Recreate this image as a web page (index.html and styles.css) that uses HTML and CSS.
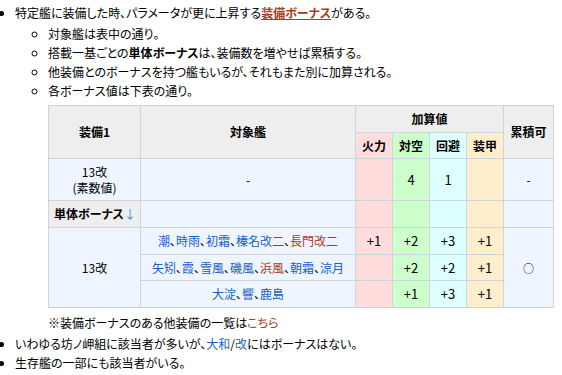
FILE: index.html
```html
<!DOCTYPE html>
<html lang="ja">
<head>
<meta charset="utf-8">
<title>装備ボーナス</title>
<link rel="stylesheet" href="styles.css">
</head>
<body>
<ul class="list1">
  <li>特定艦に装備した時、パラメータが更に上昇する<a class="visited strong" href="#">装備ボーナス</a>がある。
    <ul class="list2">
      <li>対象艦は表中の通り。</li>
      <li>搭載一基ごとの<b>単体ボーナス</b>は、装備数を増やせば累積する。</li>
      <li>他装備とのボーナスを持つ艦もいるが、それもまた別に加算される。</li>
      <li>各ボーナス値は下表の通り。
        <table class="bonus">
          <colgroup>
            <col class="c1"><col class="c2"><col class="c3"><col class="c3"><col class="c3"><col class="c3"><col class="c7">
          </colgroup>
          <tr class="h27">
            <th rowspan="2">装備1</th>
            <th rowspan="2">対象艦</th>
            <th colspan="4">加算値</th>
            <th rowspan="2">累積可</th>
          </tr>
          <tr class="h26">
            <th class="fp">火力</th>
            <th class="aa">対空</th>
            <th class="ev">回避</th>
            <th class="ar">装甲</th>
          </tr>
          <tr class="h42">
            <td>13改<br>(素数値)</td>
            <td>-</td>
            <td class="fp"></td>
            <td class="aa">4</td>
            <td class="ev">1</td>
            <td class="ar"></td>
            <td>-</td>
          </tr>
          <tr class="h27">
            <th class="left">単体ボーナス<span class="arrow">↓</span></th>
            <td></td>
            <td class="fp"></td>
            <td class="aa"></td>
            <td class="ev"></td>
            <td class="ar"></td>
            <td></td>
          </tr>
          <tr class="h27">
            <td rowspan="3">13改</td>
            <td><a href="#">潮</a>、<a href="#">時雨</a>、<a href="#">初霜</a>、<a href="#">榛名改二</a>、<a class="visited" href="#">長門改二</a></td>
            <td class="fp">+1</td>
            <td class="aa">+2</td>
            <td class="ev">+3</td>
            <td class="ar">+1</td>
            <td rowspan="3" class="mark">○</td>
          </tr>
          <tr class="h26">
            <td><a href="#">矢矧</a>、<a href="#">霞</a>、<a href="#">雪風</a>、<a href="#">磯風</a>、<a class="visited" href="#">浜風</a>、<a href="#">朝霜</a>、<a href="#">涼月</a></td>
            <td class="fp"></td>
            <td class="aa">+2</td>
            <td class="ev">+2</td>
            <td class="ar">+1</td>
          </tr>
          <tr class="h27">
            <td><a href="#">大淀</a>、<a href="#">響</a>、<a href="#">鹿島</a></td>
            <td class="fp"></td>
            <td class="aa">+1</td>
            <td class="ev">+3</td>
            <td class="ar">+1</td>
          </tr>
        </table>
        <p class="note">※装備ボーナスのある他装備の一覧は<a class="visited" href="#">こちら</a></p>
      </li>
    </ul>
  </li>
  <li>いわゆる坊ノ岬組に該当者が多いが、<a href="#">大和</a>/<a href="#">改</a>にはボーナスはない。</li>
  <li>生存艦の一部にも該当者がいる。</li>
</ul>
</body>
</html>
```

FILE: styles.css
```css
html, body {
  margin: 0;
  padding: 0;
  background: #ffffff;
}
body {
  font-family: "Noto Sans CJK JP", "Liberation Sans", sans-serif;
  font-size: 12px;
  line-height: 19px;
  color: #000000;
  font-feature-settings: "palt";
}
a {
  color: #215dc6;
  text-decoration: none;
}
a.visited {
  color: #a63d21;
}
a.strong {
  font-weight: bold;
  text-decoration: underline;
}
ul.list1 {
  margin: 3px 0 0 0;
  padding-left: 15px;
  list-style: disc;
}
ul.list2 {
  margin: 2px 0 0 0;
  padding-left: 33px;
  list-style: circle;
}
.bonus {
  border-collapse: collapse;
  table-layout: fixed;
  width: 505px;
  margin: 5px 0 0 0;
  font-size: 12px;
  line-height: 16px;
}
.bonus col.c1 { width: 92px; }
.bonus col.c2 { width: 215px; }
.bonus col.c3 { width: 37px; }
.bonus col.c7 { width: 50px; }
.bonus th, .bonus td {
  border: 1px solid #ccd5dd;
  padding: 0 4px;
  text-align: center;
  vertical-align: middle;
}
.bonus th {
  background: #eeeeee;
  font-weight: bold;
}
.bonus td {
  background: #eef5ff;
}
.bonus td.fp, .bonus td.aa, .bonus td.ev, .bonus td.ar {
  font-size: 13px;
}
.bonus td.mark {
  font-size: 11px;
}
.bonus th.left {
  text-align: left;
  padding-left: 5px;
  white-space: nowrap;
}
.bonus .arrow {
  color: #4a8ad4;
  font-weight: normal;
}
.bonus .fp { background: #ffdddd; }
.bonus .aa { background: #ccffcc; }
.bonus .ev { background: #ddffff; }
.bonus .ar { background: #ffeecc; }
.bonus tr.h26 { height: 26px; }
.bonus tr.h27 { height: 27px; }
.bonus tr.h42 { height: 42px; }
.note {
  margin: 5px 0 2px 0;
}
```
